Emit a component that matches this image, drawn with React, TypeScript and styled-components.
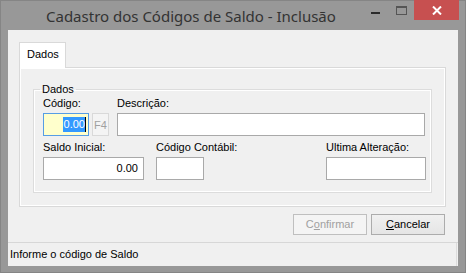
import React from "react";
import styled, { createGlobalStyle } from "styled-components";

const Global = createGlobalStyle`
  html, body { margin: 0; padding: 0; background: #ffffff; }
  * { box-sizing: border-box; }
`;

const Window = styled.div`
  width: 466px;
  height: 273px;
  background: #989898;
  border: 1px solid #858585;
  display: flex;
  flex-direction: column;
  font-family: "Liberation Sans", Arial, sans-serif;
  font-size: 11px;
  color: #000;
`;

const TitleBar = styled.div`
  height: 29px;
  display: flex;
  align-items: flex-start;
`;

const Title = styled.div`
  margin: 5px 0 0 45px;
  font-family: "Noto Sans", "Open Sans", sans-serif;
  font-size: 15px;
  line-height: 20px;
  color: #333333;
  white-space: nowrap;
`;

const Captions = styled.div`
  margin-left: auto;
  margin-right: 6px;
  margin-top: -1px;
  display: flex;
`;

const CaptionButton = styled.div<{ $w: number; $close?: boolean }>`
  width: ${(p) => p.$w}px;
  height: 20px;
  display: flex;
  align-items: center;
  justify-content: center;
  background: ${(p) => (p.$close ? "#c75050" : "transparent")};
`;

const Client = styled.div`
  flex: 1;
  margin: 0 7px 6px 7px;
  background: #f0f0f0;
  display: flex;
  flex-direction: column;
`;

const TabStrip = styled.div`
  display: flex;
  padding: 12px 0 0 11px;
`;

const Tab = styled.div`
  width: 47px;
  height: 26px;
  margin-bottom: -1px;
  position: relative;
  z-index: 1;
  background: #ffffff;
  border: 1px solid #d9d9d9;
  border-bottom: none;
  padding: 5px 0 0 7px;
  line-height: 13px;
`;

const TabPanel = styled.div`
  height: 140px;
  margin: 0 12px 0 11px;
  border: 1px solid #d9d9d9;
  box-shadow: inset 0 0 0 1px #ffffff;
  display: flex;
  flex-direction: column;
`;

const Group = styled.fieldset`
  margin: 15px 13px 13px 13px;
  height: 110px;
  border: 1px solid #dcdcdc;
  box-shadow: inset 0 0 0 1px #ffffff;
  padding: 0 5px 0 9px;
  display: flex;
  flex-direction: column;
  gap: 5px;
  min-width: 0;
`;

const Legend = styled.legend`
  padding: 0 2px;
  margin-left: -3px;
  line-height: 13px;
  font-size: 11px;
`;

const Row = styled.div<{ $top?: number }>`
  display: flex;
  align-items: flex-end;
  padding-top: ${(p) => p.$top ?? 0}px;
`;

const Field = styled.div<{ $w?: number; $grow?: boolean; $ml?: number; $mr?: number; $auto?: boolean }>`
  display: flex;
  flex-direction: column;
  gap: 3px;
  ${(p) => (p.$w ? `width: ${p.$w}px;` : "")}
  ${(p) => (p.$grow ? "flex: 1;" : "")}
  margin-left: ${(p) => (p.$auto ? "auto" : `${p.$ml ?? 0}px`)};
  margin-right: ${(p) => p.$mr ?? 0}px;
`;

const Label = styled.div`
  line-height: 13px;
  white-space: nowrap;
`;

const InputLine = styled.div`
  display: flex;
  gap: 3px;
`;

const Input = styled.div<{ $w?: number; $focus?: boolean }>`
  height: 23px;
  ${(p) => (p.$w ? `width: ${p.$w}px;` : "width: 100%;")}
  background: ${(p) => (p.$focus ? "#ffffcc" : "#ffffff")};
  border: 1px solid ${(p) => (p.$focus ? "#569de5" : "#a9a9a9")};
  display: flex;
  align-items: center;
  justify-content: flex-end;
  padding-right: 2px;
  line-height: 13px;
`;

const Selected = styled.span`
  background: #3399ff;
  color: #ffffff;
  padding: 1px 0 1px 1px;
`;

const Caret = styled.span`
  display: inline-block;
  width: 1px;
  height: 15px;
  background: #000;
`;

const F4Button = styled.div`
  width: 17px;
  height: 23px;
  border: 1px solid #d9d9d9;
  background: #f4f4f4;
  color: #a0a0a0;
  display: flex;
  align-items: center;
  justify-content: center;
`;

const ButtonRow = styled.div`
  display: flex;
  justify-content: flex-end;
  gap: 4px;
  margin: 7px 13px 0 0;
`;

const Button = styled.div<{ $disabled?: boolean }>`
  width: 74px;
  height: 21px;
  display: flex;
  align-items: center;
  justify-content: center;
  border: 1px solid ${(p) => (p.$disabled ? "#bfbfbf" : "#acacac")};
  background: ${(p) =>
    p.$disabled ? "#f4f4f4" : "linear-gradient(#f0f0f0, #e5e5e5)"};
  color: ${(p) => (p.$disabled ? "#a0a0a0" : "#000")};
  line-height: 13px;
  u { text-decoration: underline; text-underline-offset: 1px; }
`;

const StatusBar = styled.div`
  margin-top: 7px;
  flex: 1;
  border-top: 1px solid #d7d7d7;
  display: flex;
`;

const StatusText = styled.div`
  flex: 1;
  display: flex;
  align-items: center;
  padding-left: 2px;
  line-height: 13px;
  border-right: 1px solid #dcdcdc;
  margin-right: 1px;
`;

export default function App() {
  return (
    <>
      <Global />
      <Window>
        <TitleBar>
          <Title>Cadastro dos Códigos de Saldo - Inclusão</Title>
          <Captions>
            <CaptionButton $w={26}>
              <svg width="9" height="10" viewBox="0 0 9 10">
                <rect x="0" y="7" width="9" height="2" fill="#2b2b2b" />
              </svg>
            </CaptionButton>
            <CaptionButton $w={26}>
              <svg width="11" height="9" viewBox="0 0 11 9">
                <rect x="0.5" y="0.5" width="10" height="8" fill="none" stroke="#555" />
                <rect x="0" y="0" width="11" height="2" fill="#555" />
              </svg>
            </CaptionButton>
            <CaptionButton $w={45} $close>
              <svg width="10" height="9" viewBox="0 0 10 9">
                <path d="M1 0.5 L9 8.5 M9 0.5 L1 8.5" stroke="#fff" strokeWidth="2" />
              </svg>
            </CaptionButton>
          </Captions>
        </TitleBar>
        <Client>
          <TabStrip>
            <Tab>Dados</Tab>
          </TabStrip>
          <TabPanel>
            <Group>
              <Legend>Dados</Legend>
              <Row $top={1}>
                <Field>
                  <Label>Código:</Label>
                  <InputLine>
                    <Input $w={46} $focus>
                      <Selected>0.00</Selected>
                      <Caret />
                    </Input>
                    <F4Button>F4</F4Button>
                  </InputLine>
                </Field>
                <Field $grow $ml={8} $mr={1}>
                  <Label>Descrição:</Label>
                  <Input />
                </Field>
              </Row>
              <Row>
                <Field $w={101}>
                  <Label>Saldo Inicial:</Label>
                  <Input>0.00&nbsp;</Input>
                </Field>
                <Field $w={48} $ml={12}>
                  <Label>Código Contábil:</Label>
                  <Input />
                </Field>
                <Field $w={100} $auto>
                  <Label>Ultima Alteração:</Label>
                  <Input />
                </Field>
              </Row>
            </Group>
          </TabPanel>
          <ButtonRow>
            <Button $disabled>
              <span>
                C<u>o</u>nfirmar
              </span>
            </Button>
            <Button>
              <span>
                <u>C</u>ancelar
              </span>
            </Button>
          </ButtonRow>
          <StatusBar>
            <StatusText>Informe o código de Saldo</StatusText>
          </StatusBar>
        </Client>
      </Window>
    </>
  );
}
